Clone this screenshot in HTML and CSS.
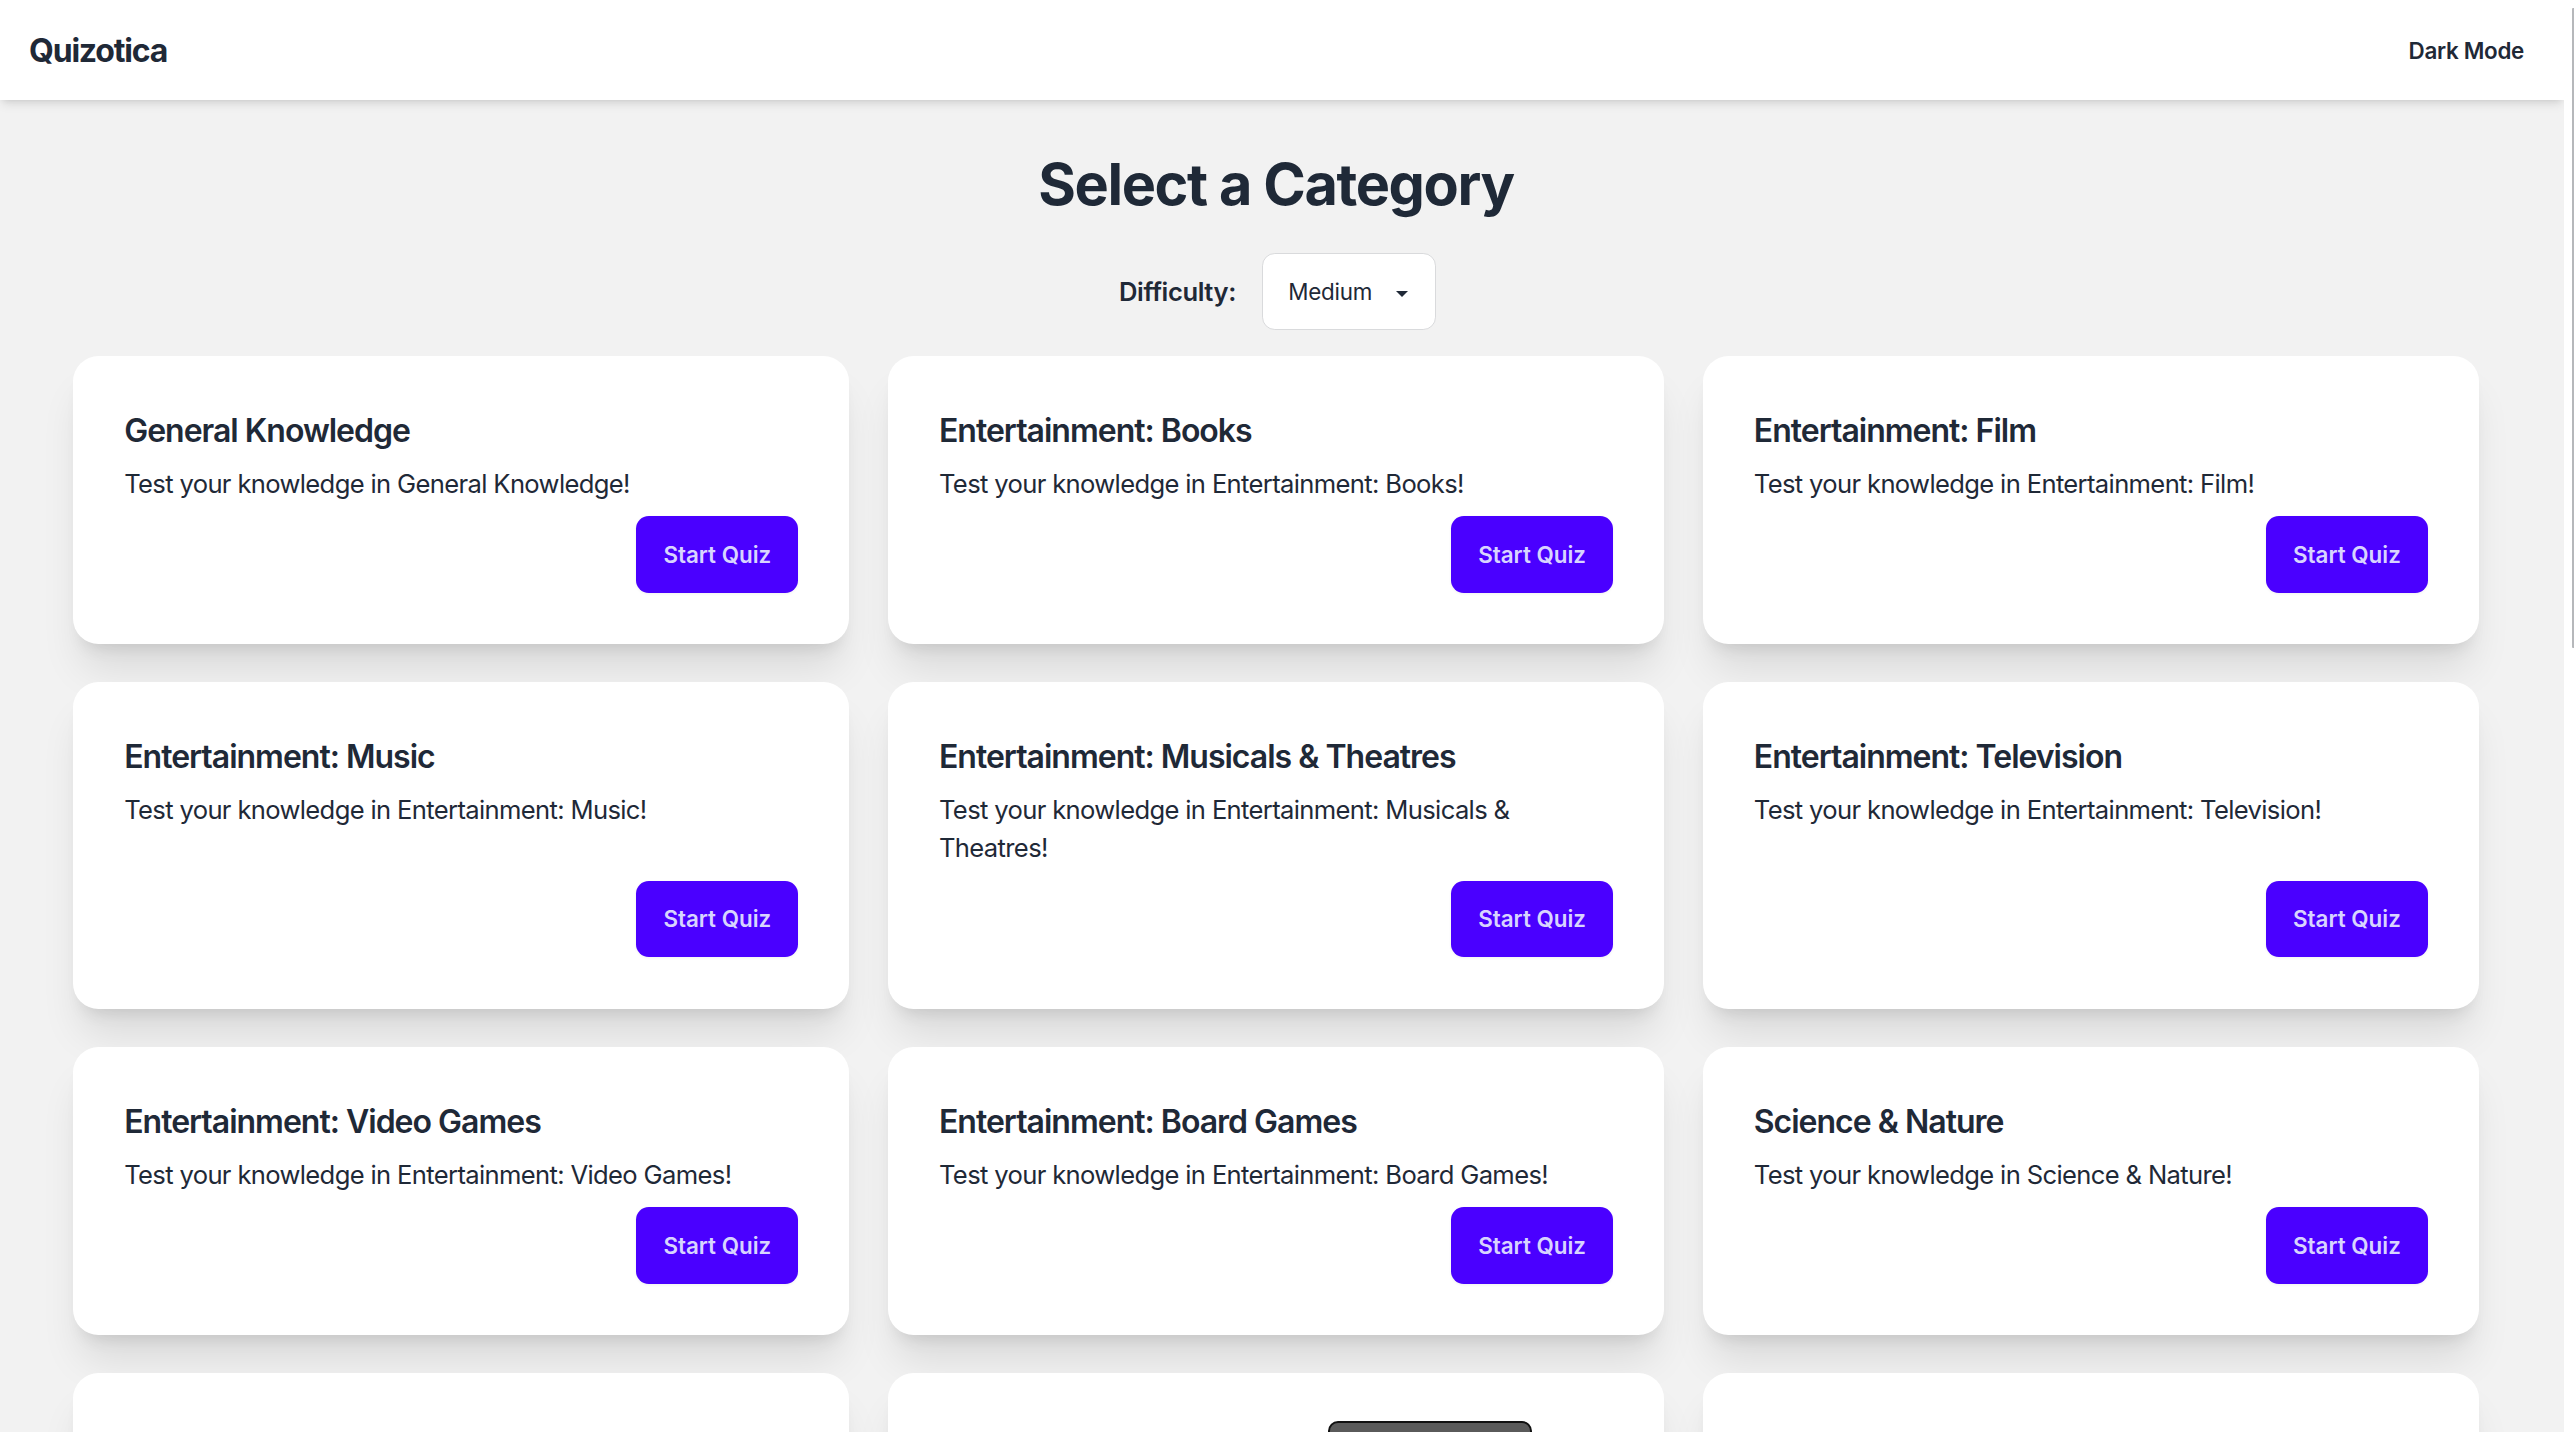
FILE: index.html
```html
<!DOCTYPE html>
<html lang="en">
<head>
<meta charset="utf-8">
<title>Quizotica</title>
<link rel="stylesheet" href="styles.css">
</head>
<body>
<div class="app">
  <header class="navbar">
    <a class="logo">Quizotica</a>
    <button class="mode-btn">Dark Mode</button>
  </header>
  <main class="main">
    <div class="container">
      <h1 class="page-title">Select a Category</h1>
      <div class="difficulty">
        <span class="difficulty-label">Difficulty:</span>
        <div class="select">
          <span class="select-value">Medium</span>
          <span class="select-arrow"></span>
        </div>
      </div>
      <div class="grid">
        <div class="card"><h2 class="card-title">General Knowledge</h2><p class="card-text">Test your knowledge in General Knowledge!</p><div class="card-actions"><button class="btn">Start Quiz</button></div></div>
        <div class="card"><h2 class="card-title">Entertainment: Books</h2><p class="card-text">Test your knowledge in Entertainment: Books!</p><div class="card-actions"><button class="btn">Start Quiz</button></div></div>
        <div class="card"><h2 class="card-title">Entertainment: Film</h2><p class="card-text">Test your knowledge in Entertainment: Film!</p><div class="card-actions"><button class="btn">Start Quiz</button></div></div>
        <div class="card"><h2 class="card-title">Entertainment: Music</h2><p class="card-text">Test your knowledge in Entertainment: Music!</p><div class="card-actions"><button class="btn">Start Quiz</button></div></div>
        <div class="card"><h2 class="card-title">Entertainment: Musicals &amp; Theatres</h2><p class="card-text">Test your knowledge in Entertainment: Musicals &amp; Theatres!</p><div class="card-actions"><button class="btn">Start Quiz</button></div></div>
        <div class="card"><h2 class="card-title">Entertainment: Television</h2><p class="card-text">Test your knowledge in Entertainment: Television!</p><div class="card-actions"><button class="btn">Start Quiz</button></div></div>
        <div class="card"><h2 class="card-title">Entertainment: Video Games</h2><p class="card-text">Test your knowledge in Entertainment: Video Games!</p><div class="card-actions"><button class="btn">Start Quiz</button></div></div>
        <div class="card"><h2 class="card-title">Entertainment: Board Games</h2><p class="card-text">Test your knowledge in Entertainment: Board Games!</p><div class="card-actions"><button class="btn">Start Quiz</button></div></div>
        <div class="card"><h2 class="card-title">Science &amp; Nature</h2><p class="card-text">Test your knowledge in Science &amp; Nature!</p><div class="card-actions"><button class="btn">Start Quiz</button></div></div>
        <div class="card card-placeholder"></div>
        <div class="card card-placeholder"><div class="hover-tip"></div></div>
        <div class="card card-placeholder"></div>
      </div>
    </div>
  </main>
</div>
<div class="scrollbar"><div class="scroll-thumb"></div></div>
</body>
</html>
```

FILE: styles.css
```css
html, body {
  margin: 0;
  height: 100%;
}

body {
  display: flex;
  overflow: hidden;
  background: #f2f2f2;
  color: #1f2937;
  font-family: Inter, "Noto Sans", "Liberation Sans", sans-serif;
}

.app {
  flex: 1;
  min-width: 0;
  display: flex;
  flex-direction: column;
  overflow: hidden;
}

.navbar {
  position: relative;
  z-index: 2;
  flex: none;
  height: 100px;
  display: flex;
  align-items: center;
  justify-content: space-between;
  padding: 0 40px 0 29px;
  background: #ffffff;
  box-shadow: 0 6px 10px -2px rgba(0, 0, 0, 0.1), 0 3px 6px -3px rgba(0, 0, 0, 0.1);
}

.logo {
  font-size: 32px;
  font-weight: 700;
  letter-spacing: -1.2px;
  color: #1f2937;
}

.mode-btn {
  border: none;
  background: transparent;
  padding: 0;
  font-family: inherit;
  font-size: 22.4px;
  font-weight: 600;
  letter-spacing: -0.3px;
  color: #1f2937;
}

.main {
  flex: 1;
  padding: 52px 0 0 73px;
}

.container {
  width: 2406px;
}

.page-title {
  margin: 0 0 37.4px;
  font-size: 57.6px;
  line-height: 64px;
  font-weight: 700;
  letter-spacing: -1.4px;
  text-align: center;
}

.difficulty {
  display: flex;
  justify-content: center;
  align-items: center;
  gap: 25.6px;
  margin-bottom: 25.6px;
  padding-left: 3px;
}

.difficulty-label {
  font-size: 25.6px;
  font-weight: 600;
  letter-spacing: -0.4px;
}

.select {
  box-sizing: border-box;
  width: 174.4px;
  height: 76.8px;
  display: flex;
  align-items: center;
  padding: 0 27px 0 25.6px;
  background: #ffffff;
  border: 1.6px solid #d9dadc;
  border-radius: 12.8px;
  font-size: 22.4px;
  letter-spacing: -0.2px;
}

.select-value {
  flex: 1;
}

.select-arrow {
  width: 0;
  height: 0;
  margin-top: 4px;
  border-left: 6px solid transparent;
  border-right: 6px solid transparent;
  border-top: 6px solid #1f2937;
}

.grid {
  display: grid;
  grid-template-columns: repeat(3, 1fr);
  gap: 38.4px;
}

.card {
  position: relative;
  display: flex;
  flex-direction: column;
  gap: 12.8px;
  padding: 51.2px;
  background: #ffffff;
  border-radius: 25.6px;
  box-shadow: 0 32px 40px -8px rgba(0, 0, 0, 0.1), 0 12.8px 16px -9.6px rgba(0, 0, 0, 0.1);
}

.card-placeholder {
  height: 185px;
}

.card-title {
  margin: 0;
  padding-top: 3px;
  font-size: 32px;
  line-height: 41.8px;
  font-weight: 600;
  letter-spacing: -1px;
}

.card-text {
  margin: 0;
  font-size: 25.6px;
  line-height: 38.4px;
  letter-spacing: -0.65px;
}

.card-actions {
  margin-top: auto;
  display: flex;
  justify-content: flex-end;
}

.btn {
  height: 76.8px;
  padding: 0 27px;
  border: none;
  border-radius: 12.8px;
  background: #4a00ff;
  color: #d8d4ff;
  font-family: inherit;
  font-size: 22.4px;
  font-weight: 600;
  letter-spacing: 0;
  box-shadow: 0 1px 3px rgba(0, 0, 0, 0.06);
}

.hover-tip {
  position: absolute;
  top: 48px;
  left: 440px;
  width: 204px;
  height: 80px;
  box-sizing: border-box;
  background: #5a5a5a;
  border: 2px solid #111111;
  border-radius: 10px;
}

.scrollbar {
  flex: none;
  width: 10px;
  background: #ffffff;
  display: flex;
  justify-content: flex-end;
  padding-top: 8px;
  box-sizing: border-box;
}

.scroll-thumb {
  width: 2px;
  height: 640px;
  background: #b6b8bb;
  border-radius: 1px 0 0 1px;
}
```
